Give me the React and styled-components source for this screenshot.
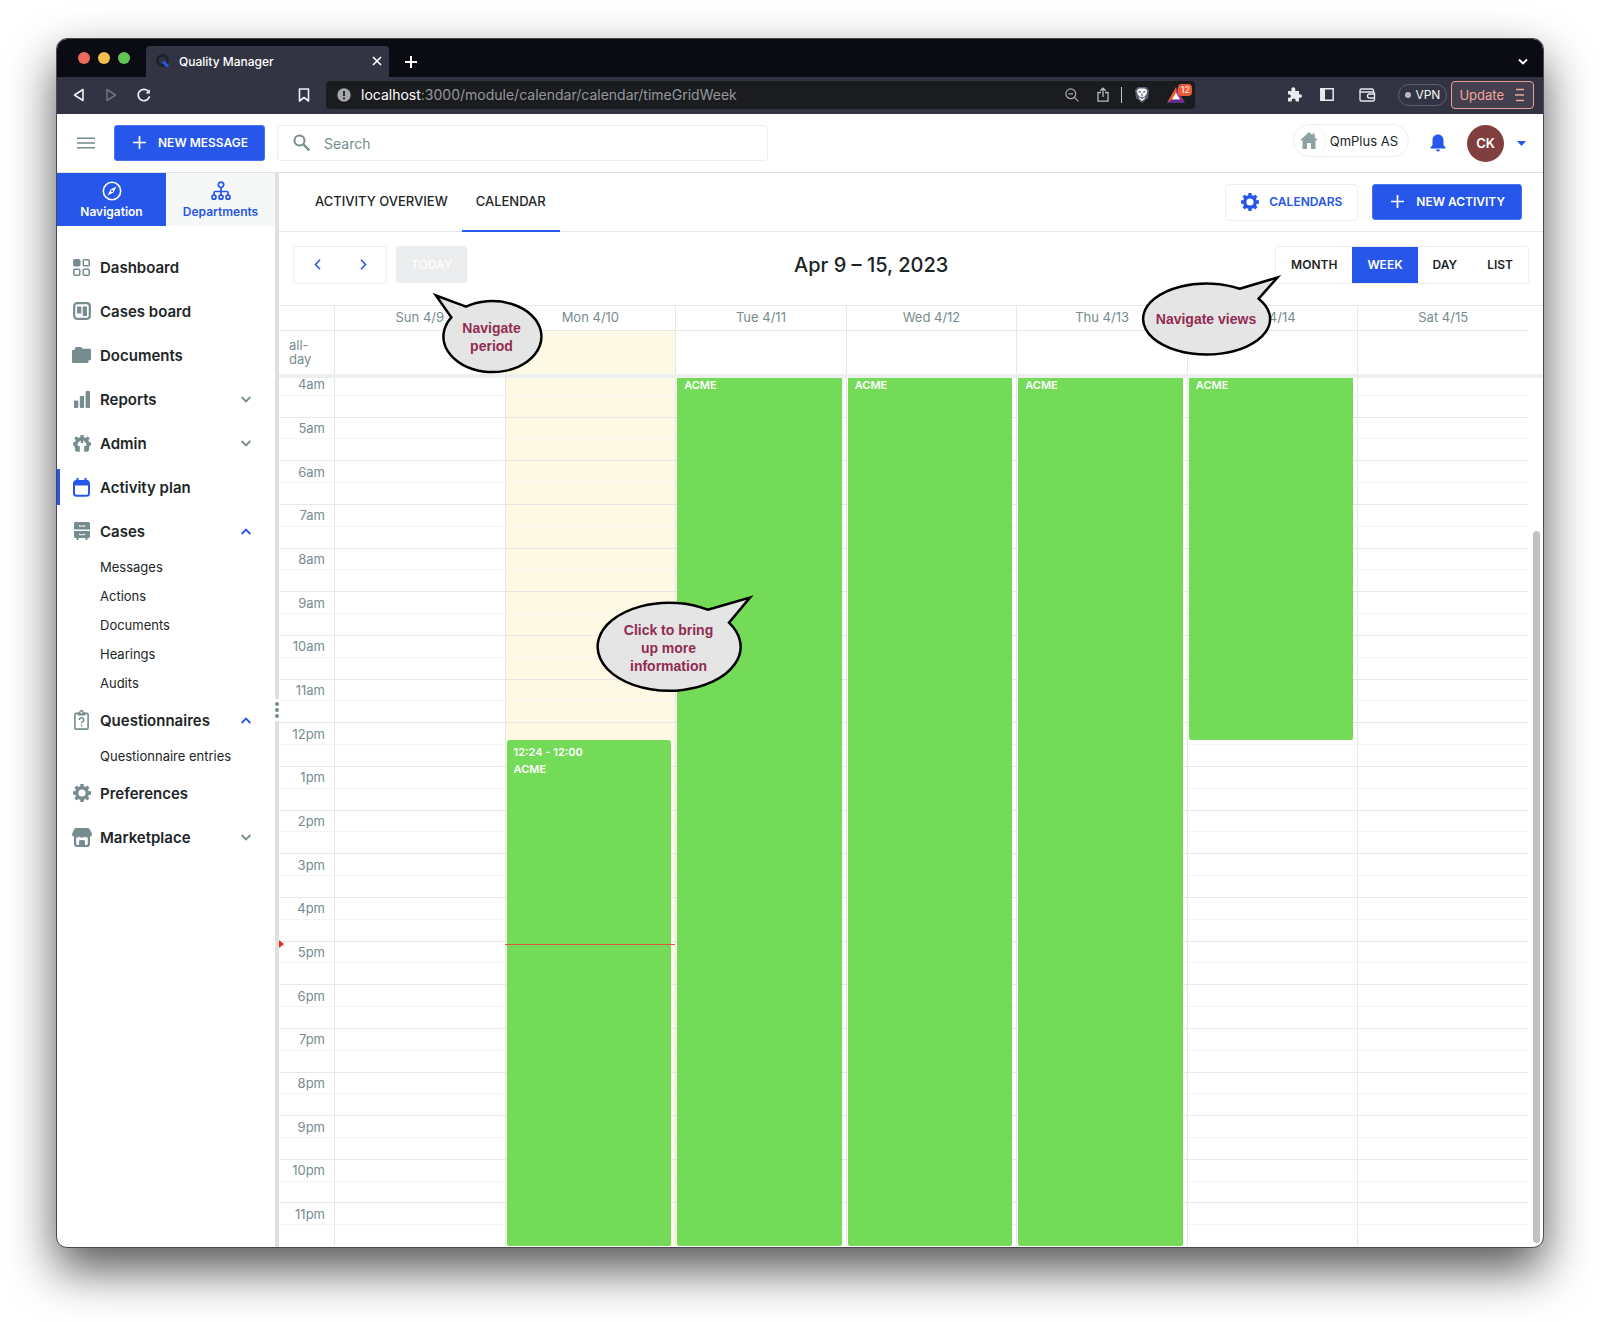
import React, { useState } from 'react'
import styled, { createGlobalStyle } from 'styled-components'

const BLUE = '#2656ea'
const GREY = '#768c8e'
const LINE = '#e6e8e8'

const days = ['Sun 4/9', 'Mon 4/10', 'Tue 4/11', 'Wed 4/12', 'Thu 4/13', 'Fri 4/14', 'Sat 4/15']
const TODAY = 1
const FIRST_HOUR = 4
const HOURS = 20

const events = [
  { day: 1, start: 12.4, end: 24, time: '12:24 - 12:00', title: 'ACME' },
  { day: 2, start: 4, end: 24, title: 'ACME' },
  { day: 3, start: 4, end: 24, title: 'ACME' },
  { day: 4, start: 4, end: 24, title: 'ACME' },
  { day: 5, start: 4, end: 12.4, title: 'ACME' }
]

const slots = Array.from({ length: HOURS * 2 }, (_, i) => FIRST_HOUR + i / 2)
const percent = (hour) => `${((hour - FIRST_HOUR) / HOURS) * 100}%`
const hourLabel = (hour) => `${hour > 12 ? hour - 12 : hour}${hour < 12 ? 'am' : 'pm'}`

function App() {
  return (
    <React.Fragment>
      <GlobalStyle/>
      <Desktop>
        <Window>
          <TabStrip/>
          <BrowserBar/>
          <AppHeader/>
          <AppBody>
            <Sidebar/>
            <Splitter><Handle><i/><i/><i/></Handle></Splitter>
            <Main/>
          </AppBody>
        </Window>
      </Desktop>
    </React.Fragment>
  )
}

const TabStrip = () => {
  return (
    <Strip>
      <Lights>
        <Light $color="#ed6a5e"/>
        <Light $color="#f4bf4f"/>
        <Light $color="#61c554"/>
      </Lights>
      <BrowserTab>
        <svg width="14" height="14" viewBox="0 0 14 14" fill="none">
          <circle cx="6.5" cy="6.5" r="5" stroke="#1d242b" strokeWidth="3"/>
          <path d="M7 7.5L12 12.5" stroke={BLUE} strokeWidth="3"/>
        </svg>
        <TabTitle>Quality Manager</TabTitle>
        <IconButton aria-label="Close tab">
          <svg width="10" height="10" viewBox="0 0 10 10" stroke="#fff" strokeWidth="1.7"><path d="M1 1l8 8M9 1l-8 8"/></svg>
        </IconButton>
      </BrowserTab>
      <IconButton aria-label="New tab">
        <svg width="12" height="12" viewBox="0 0 12 12" stroke="#fff" strokeWidth="2"><path d="M6 0v12M0 6h12"/></svg>
      </IconButton>
      <Spacer/>
      <IconButton aria-label="Search tabs">
        <svg width="10" height="8" viewBox="0 0 10 8" fill="none" stroke="#fff" strokeWidth="1.8"><path d="M1 1.5l4 4 4-4"/></svg>
      </IconButton>
    </Strip>
  )
}

const BrowserBar = () => {
  return (
    <Bar>
      <BarNav>
        <IconButton aria-label="Back">
          <svg width="12" height="14" viewBox="0 0 12 14" fill="none" stroke="#f0f0f2" strokeWidth="1.6" strokeLinejoin="round"><path d="M10 1.5v11L1.5 7z"/></svg>
        </IconButton>
        <IconButton aria-label="Forward">
          <svg width="12" height="14" viewBox="0 0 12 14" fill="none" stroke="#6f727f" strokeWidth="1.5" strokeLinejoin="round"><path d="M2 1.5v11L10.5 7z"/></svg>
        </IconButton>
        <IconButton aria-label="Reload">
          <svg width="14" height="14" viewBox="0 0 14 14" fill="none" stroke="#f0f0f2" strokeWidth="1.7" strokeLinecap="round"><path d="M12.3 9A5.7 5.7 0 1 1 11 3"/><path d="M12.8 1.2v4.2H8.6z" fill="#f0f0f2" stroke="none"/></svg>
        </IconButton>
      </BarNav>
      <IconButton aria-label="Bookmark">
        <svg width="12" height="14" viewBox="0 0 12 14" fill="none" stroke="#f0f0f2" strokeWidth="1.6" strokeLinejoin="round"><path d="M1.5 1h9v12L6 9.5 1.5 13z"/></svg>
      </IconButton>
      <Address>
        <svg width="14" height="14" viewBox="0 0 14 14"><circle cx="7" cy="7" r="6.7" fill="#a4a6aa"/><path d="M7 3v5M7 9.4v1.8" stroke="#1b1c20" strokeWidth="1.8"/></svg>
        <Url type="button"><b>localhost</b>:3000/module/calendar/calendar/timeGridWeek</Url>
        <AddressIcons>
          <svg width="14" height="14" viewBox="0 0 14 14" fill="none" stroke="#a9abb0" strokeWidth="1.2"><circle cx="5.8" cy="5.8" r="4.9"/><path d="M9.4 9.4l4 4M3.6 5.8H8"/></svg>
          <svg width="12" height="15" viewBox="0 0 12 15" fill="none" stroke="#b9bbc0" strokeWidth="1.3"><path d="M4 5.5H1v8.7h10V5.5H8M6 10V1.2M3.3 3.8L6 1.1l2.7 2.7"/></svg>
          <Divider/>
          <svg width="16" height="18" viewBox="0 0 16 18">
            <path d="M4 1h8l3 3-1 8-6 5-6-5L1 4z" fill="#5b5d70"/>
            <path d="M5 2.5h6l2.3 2.3-1 3.7-2 2 .6 2L8 15l-2.900-2.500.6-2-2-2-1-3.700z" fill="#fff"/>
            <path d="M4.400 5.500l2.600.8M11.600 5.500l-2.600.8M8 7.500v3M6.300 11.200L8 12.400l1.700-1.200" stroke="#4a4c5e" strokeWidth="1.100" fill="none"/>
          </svg>
          <Rewards>
            <svg width="18" height="16" viewBox="0 0 18 16">
              <path d="M9 0L0 16l9-5.500z" fill="#ef5a2f"/>
              <path d="M9 0l9 16-9-5.500z" fill="#a3317e"/>
              <path d="M0 16h18l-5-3.500H4.500z" fill="#5f2e8e"/>
              <path d="M9 5.600l4 7H5z" fill="#fff"/>
            </svg>
            <Badge>12</Badge>
          </Rewards>
        </AddressIcons>
      </Address>
      <BarActions>
        <svg width="15" height="15" viewBox="0 0 15 15" fill="#e9e9ee"><path d="M1 4h3.500C3.800 1.800 4.800.3 6.300.3S8.800 1.800 8.200 4H12v3.300c1.700-.5 3 .3 3 1.700s-1.300 2.200-3 1.700V14.500H8.600c.3-1.900-.6-2.900-1.900-2.900s-2.300 1-1.900 2.900H1v-3.700c2 .3 2.900-.5 2.900-1.700S3 7.200 1 7.500z"/></svg>
        <svg width="14" height="13" viewBox="0 0 14 13" fill="none" stroke="#e9e9ee" strokeWidth="1.500"><path d="M.8.8h12.400v11.400H.8z"/><path d="M1 1h4v11H1z" fill="#e9e9ee" stroke="none"/></svg>
        <WalletIcon/>
      </BarActions>
      <Vpn type="button"><i/>VPN</Vpn>
      <Update type="button">
        Update
        <svg width="10" height="14" viewBox="0 0 10 14" stroke="#f0a79c" strokeWidth="1.300"><path d="M1 1.500h8M0 7h9M1 12.500h8"/></svg>
      </Update>
    </Bar>
  )
}

const WalletIcon = () => (
  <svg width="17" height="14" viewBox="0 0 17 14" fill="none" stroke="#e9e9ee" strokeWidth="1.400">
    <path d="M14.500 4V2.500a1.500 1.500 0 0 0-1.500-1.500H2.500A1.500 1.500 0 0 0 1 2.500v9A1.500 1.500 0 0 0 2.500 13H14a1.500 1.500 0 0 0 1.500-1.500V10M1.500 4H14a1.500 1.500 0 0 1 1.500 1.500V10h-5a2 2 0 0 1 0-4h5"/>
  </svg>
)

const AppHeader = () => {
  return (
    <Header>
      <MenuButton aria-label="Menu">
        <svg width="18" height="12" viewBox="0 0 18 12" stroke={GREY} strokeWidth="1.500"><path d="M0 1.200h18M0 6h18M0 10.800h18"/></svg>
      </MenuButton>
      <PrimaryButton type="button"><Plus/>NEW MESSAGE</PrimaryButton>
      <SearchBox>
        <svg width="18" height="18" viewBox="0 0 18 18" fill="none" stroke={GREY} strokeWidth="2"><circle cx="6.500" cy="6.500" r="5"/><path d="M10.500 10.500l5.800 5.800" strokeWidth="2.400"/></svg>
        <SearchInput type="search" placeholder="Search" aria-label="Search"/>
      </SearchBox>
      <Spacer/>
      <Company type="button">
        <CompanyIcon>
          <svg width="18" height="17" viewBox="0 0 18 17" fill="#8fa1a3"><path d="M9 0l3.500 3.200V1.500h2.200v3.700L18 8.300h-2.500V17H11v-6H7v6H2.500V8.300H0z"/></svg>
        </CompanyIcon>
        QmPlus AS
      </Company>
      <IconButton aria-label="Notifications">
        <svg width="16" height="18" viewBox="0 0 16 18" fill={BLUE}><path d="M8 .5c3.300 0 5.500 2.500 5.500 5.700V11l2 2.500v1H.5v-1l2-2.500V6.200C2.500 3 4.700.5 8 .5zM6 15.500h4A2 2 0 0 1 6 15.500z"/></svg>
      </IconButton>
      <Avatar>CK</Avatar>
      <IconButton aria-label="Account menu">
        <svg width="9" height="5" viewBox="0 0 9 5" fill={BLUE}><path d="M0 0h9L4.500 5z"/></svg>
      </IconButton>
    </Header>
  )
}

const Plus = () => (
  <svg width="13" height="13" viewBox="0 0 13 13" stroke="#fff" strokeWidth="1.700"><path d="M6.500 0v13M0 6.500h13"/></svg>
)

const Gear = ({ size = 18 }) => (
  <svg width={size} height={size} viewBox="0 0 18 18" fill="none" stroke="currentColor">
    <circle cx="9" cy="9" r="5.300" strokeWidth="3.400"/>
    {[0, 45, 90, 135].map((angle) => (
      <path key={angle} d="M9 0v3.500M9 14.500V18" strokeWidth="3.400" transform={`rotate(${angle} 9 9)`}/>
    ))}
  </svg>
)

const Chevron = ({ open }) => (
  <svg width="10" height="7" viewBox="0 0 10 7" fill="none" stroke={open ? BLUE : GREY} strokeWidth="1.800">
    <path d={open ? 'M.7 6L5 1.600 9.300 6' : 'M.7 1L5 5.400 9.300 1'}/>
  </svg>
)

const icons = {
  dashboard: (
    <svg width="17" height="17" viewBox="0 0 17 17" fill="none" stroke={GREY} strokeWidth="1.500">
      <rect x=".8" y=".8" width="6" height="6" rx="1" fill={GREY}/>
      <rect x="10.200" y=".8" width="6" height="6" rx="1"/>
      <rect x=".8" y="10.200" width="6" height="6" rx="1"/>
      <rect x="10.200" y="10.200" width="6" height="6" rx="1"/>
    </svg>
  ),
  board: (
    <svg width="18" height="18" viewBox="0 0 18 18">
      <rect x="1.200" y="1.200" width="15.600" height="15.600" rx="3" fill="none" stroke={GREY} strokeWidth="2.200"/>
      <rect x="4" y="4.500" width="4.300" height="7" rx=".6" fill={GREY}/>
      <rect x="9.700" y="4.500" width="4.300" height="9.500" rx=".6" fill={GREY}/>
    </svg>
  ),
  documents: (
    <svg width="19" height="16" viewBox="0 0 19 16" fill={GREY}><path d="M3 1.200Q3 0 4.200 0H9l1.600 1.700H18q1 0 1 1V12q0 1.200-1.200 1.200H16.500v1.600q0 1.200-1.200 1.200H1.200Q0 16 0 14.800V4q0-1.200 1.200-1.200H3z"/></svg>
  ),
  reports: (
    <svg width="16" height="17" viewBox="0 0 16 17" fill={GREY}>
      <rect y="9.500" width="4.300" height="7.500" rx="1"/>
      <rect x="5.800" y="5" width="4.300" height="12" rx="1"/>
      <rect x="11.600" y="0" width="4.400" height="17" rx="1"/>
    </svg>
  ),
  admin: (
    <svg width="18" height="17" viewBox="0 0 18 17" fill="none" stroke={GREY}>
      <path d="M4.700 14A6 6 0 1 1 13.300 14" strokeWidth="3.600"/>
      <path d="M9 0v3M2.300 2.300l2 2M15.700 2.300l-2 2M0 9h3M18 9h-3M2.600 15.800l2.200-2.200M15.400 15.800l-2.200-2.200" strokeWidth="3.200"/>
      <path d="M5.600 11v5.800M12.400 11v5.800" strokeWidth="2.400"/>
      <path d="M9 2v6" strokeWidth="2.600"/>
    </svg>
  ),
  plan: (
    <svg width="17" height="19" viewBox="0 0 17 19">
      <rect x="1" y="3" width="15" height="14.800" rx="2.600" fill="none" stroke={BLUE} strokeWidth="2"/>
      <path d="M1 7.500V4.500Q1 2.500 3 2.500h11q2 0 2 2v3zM3.500 0h2v3h-2zM11.500 0h2v3h-2z" fill={BLUE}/>
    </svg>
  ),
  cases: (
    <svg width="16" height="18" viewBox="0 0 16 18" fill={GREY}>
      <path d="M1.500 0h13Q16 0 16 1.500V7.500H0V1.500Q0 0 1.500 0zM0 9h16v5.500q0 1.500-1.500 1.500H13.500v2h-2v-2h-7v2h-2v-2H1.500Q0 16 0 14.500z"/>
      <path d="M5.500 3.200v1h5v-1M5.500 11.700v1h5v-1" fill="none" stroke="#fff" strokeWidth="1"/>
    </svg>
  ),
  questions: (
    <svg width="15" height="20" viewBox="0 0 15 20" fill="none" stroke={GREY}>
      <rect x=".9" y="3.400" width="13.200" height="15.700" rx="1.200" strokeWidth="1.600"/>
      <path d="M3.700 2.500h7.600v3H3.700z" fill={GREY} stroke="none"/>
      <circle cx="7.500" cy="2.500" r="1.700" fill="#fff" strokeWidth="1.400"/>
      <path d="M5.200 10q0-2.200 2.300-2.200T9.800 9.900q0 1.200-1.300 1.700t-1 1.900M7.500 14.800v1.500" strokeWidth="1.400"/>
    </svg>
  ),
  preferences: <Gear/>,
  market: (
    <svg width="20" height="19" viewBox="0 0 20 19">
      <path d="M4.500 0h11q2 0 2.700 2L20 6q0 2.500-2 2.800V16q0 3-3 3H5q-3 0-3-3V8.800Q0 8.500 0 6l1.800-4Q2.500 0 4.500 0z" fill={GREY}/>
      <path d="M4.200 9.600v5.800q0 1.500 1.500 1.500H7v-3.500q0-1.500 1.500-1.500h3q1.500 0 1.500 1.500v3.500h1.300q1.500 0 1.500-1.500V9.600q-1.600.1-2.800-1.200Q10 10.800 7 8.400 5.800 9.700 4.200 9.600z" fill="#fff"/>
    </svg>
  )
}

const menu = [
  { name: 'Dashboard', icon: 'dashboard' },
  { name: 'Cases board', icon: 'board' },
  { name: 'Documents', icon: 'documents' },
  { name: 'Reports', icon: 'reports', expandable: true },
  { name: 'Admin', icon: 'admin', expandable: true },
  { name: 'Activity plan', icon: 'plan', active: true },
  { name: 'Cases', icon: 'cases', expandable: true, children: ['Messages', 'Actions', 'Documents', 'Hearings', 'Audits'] },
  { name: 'Questionnaires', icon: 'questions', expandable: true, children: ['Questionnaire entries'] },
  { name: 'Preferences', icon: 'preferences' },
  { name: 'Marketplace', icon: 'market', expandable: true }
]

const Sidebar = () => {
  return (
    <Side>
      <SideTabs>
        <SideTab $active type="button">
          <svg width="20" height="20" viewBox="0 0 20 20" fill="none" stroke="currentColor"><circle cx="10" cy="10" r="8.700" strokeWidth="1.600"/><path d="M14.500 5.500L11.500 11.500 5.500 14.500 8.500 8.500z" fill="currentColor" stroke="none"/><circle cx="10" cy="10" r="1.100" fill={BLUE} stroke="none"/></svg>
          Navigation
        </SideTab>
        <SideTab type="button">
          <svg width="20" height="20" viewBox="0 0 20 20" fill="none" stroke="currentColor" strokeWidth="1.700"><circle cx="10" cy="3.800" r="2.700"/><circle cx="3" cy="16.200" r="2"/><circle cx="10" cy="16.200" r="2"/><circle cx="17" cy="16.200" r="2"/><path d="M10 6.500v7.700M3 14.200v-2.500q0-1.200 1.200-1.200h11.600q1.200 0 1.200 1.200v2.500"/></svg>
          Departments
        </SideTab>
      </SideTabs>
      <Nav>
        {menu.map(({ name, icon, active, expandable, children }, key) =>
          <React.Fragment key={key}>
            <NavItem href="#" $active={active}>
              <NavIcon>{icons[icon]}</NavIcon>
              <NavLabel>{name}</NavLabel>
              {expandable && <Chevron open={Boolean(children)}/>}
            </NavItem>
            {children && children.map((child) => <SubItem href="#" key={child}>{child}</SubItem>)}
          </React.Fragment>
        )}
      </Nav>
    </Side>
  )
}

const Main = () => {
  const [view, setView] = useState('WEEK')

  return (
    <MainArea>
      <PageTabs>
        <PageTab type="button">ACTIVITY OVERVIEW</PageTab>
        <PageTab type="button" $active>CALENDAR</PageTab>
        <Spacer/>
        <PageActions>
          <OutlineButton type="button"><Gear/>CALENDARS</OutlineButton>
          <PrimaryButton type="button"><Plus/>NEW ACTIVITY</PrimaryButton>
        </PageActions>
      </PageTabs>
      <Calendar>
        <CalendarBar>
          <PeriodControls>
            <ArrowGroup>
              <ArrowButton aria-label="Previous week">
                <svg width="7" height="11" viewBox="0 0 7 11" fill="none" stroke={BLUE} strokeWidth="1.600"><path d="M6 .7L1.500 5.500 6 10.300"/></svg>
              </ArrowButton>
              <ArrowButton aria-label="Next week">
                <svg width="7" height="11" viewBox="0 0 7 11" fill="none" stroke={BLUE} strokeWidth="1.600"><path d="M1 .7l4.500 4.800L1 10.300"/></svg>
              </ArrowButton>
            </ArrowGroup>
            <TodayButton type="button" disabled>TODAY</TodayButton>
          </PeriodControls>
          <Period>Apr 9 – 15, 2023</Period>
          <ViewGroup>
            {['MONTH', 'WEEK', 'DAY', 'LIST'].map((name) =>
              <ViewButton type="button" key={name} $active={view === name} onClick={() => setView(name)}>{name}</ViewButton>
            )}
          </ViewGroup>
        </CalendarBar>
        <WeekHead>
          <thead>
            <DayRow>
              <td/>
              {days.map((day) => <th scope="col" key={day}>{day}</th>)}
            </DayRow>
          </thead>
          <tbody>
            <AllDayRow>
              <th scope="row">all-day</th>
              {days.map((day, key) => <DayCell key={day} $today={key === TODAY}/>)}
            </AllDayRow>
          </tbody>
        </WeekHead>
        <ScrollArea>
          <TimeGrid>
            <SlotTable>
              <tbody>
                {slots.map((slot) =>
                  <SlotRow key={slot} $half={slot % 1 !== 0}>
                    <th scope="row">{slot % 1 === 0 && hourLabel(slot)}</th>
                    {days.map((day, key) => <DayCell key={day} $today={key === TODAY}/>)}
                  </SlotRow>
                )}
              </tbody>
            </SlotTable>
            <EventLayer>
              <NowArrow style={{ top: percent(17.08) }}/>
              {days.map((day, key) =>
                <EventColumn key={day}>
                  {events.filter((event) => event.day === key).map(({ start, end, time, title }) =>
                    <Event href="#" key={start} style={{ top: percent(start), height: `${((end - start) / HOURS) * 100}%` }}>
                      {time && <span>{time}</span>}
                      <span>{title}</span>
                    </Event>
                  )}
                  {key === TODAY && <NowLine style={{ top: percent(17.08) }}/>}
                </EventColumn>
              )}
            </EventLayer>
          </TimeGrid>
          <ScrollThumb/>
        </ScrollArea>
        <PeriodCallout>
          <svg width="110" height="84" viewBox="0 0 110 84"><path d="M33 14.700L3 3.500 18.300 25.300A49 35.500 0 1 0 33 14.700z"/></svg>
          <p>Navigate<br/>period</p>
        </PeriodCallout>
        <ViewsCallout>
          <svg width="142" height="84" viewBox="0 0 142 84"><path d="M98.700 15.700L136.500 4.500 117.700 25.700A63.500 35.500 0 1 1 98.700 15.700z"/></svg>
          <p>Navigate views</p>
        </ViewsCallout>
        <InfoCallout>
          <svg width="161" height="102" viewBox="0 0 161 102"><path d="M111.700 17.700L154 5.500 133 30.700A71.500 44 0 1 1 111.700 17.700z"/></svg>
          <p>Click to bring<br/>up more<br/>information</p>
        </InfoCallout>
      </Calendar>
    </MainArea>
  )
}

const GlobalStyle = createGlobalStyle`
  * {
    box-sizing: border-box;
  }
  body {
    margin: 0;
    background: #fff;
    color: #1c2526;
    font-family: Inter, "Liberation Sans", sans-serif;
    font-size: 13px;
  }
  button, input {
    font-family: inherit;
    margin: 0;
  }
  button {
    cursor: pointer;
  }
  a {
    color: inherit;
    text-decoration: none;
  }
  svg {
    display: block;
    flex: none;
  }
`

const Desktop = styled.div`
  display: flex;
  min-height: 100vh;
  padding: 38px 56px 74px;
  overflow: hidden;
`

const Window = styled.div`
  display: flex;
  flex-direction: column;
  flex: 1;
  min-width: 0;
  border: 1px solid #4a4a4e;
  border-radius: 11px;
  background: #fff;
  overflow: hidden;
  box-shadow: 0 22px 48px rgba(0, 0, 0, 0.66);
`

const Spacer = styled.div`
  flex: 1;
`

const IconButton = styled.button`
  display: flex;
  align-items: center;
  justify-content: center;
  padding: 0;
  border: 0;
  background: none;
`

const Strip = styled.div`
  display: flex;
  align-items: center;
  height: 38px;
  padding: 7px 15px 0 21px;
  background: #0b0b14;
`

const Lights = styled.div`
  display: flex;
  gap: 8px;
  padding-bottom: 7px;
`

const Light = styled.span`
  width: 12px;
  height: 12px;
  border-radius: 50%;
  background: ${({ $color }) => $color};
`

const BrowserTab = styled.div`
  display: flex;
  align-items: center;
  gap: 9px;
  width: 243px;
  height: 100%;
  margin: 0 16px;
  padding: 0 7px 1px 10px;
  border-radius: 4px 4px 0 0;
  background: #323443;
`

const TabTitle = styled.span`
  flex: 1;
  color: #fff;
  font-size: 12px;
  font-weight: 500;
`

const Bar = styled.div`
  display: flex;
  align-items: center;
  height: 37px;
  padding: 0 9px 2px 16px;
  background: #323443;
`

const BarNav = styled.div`
  display: flex;
  gap: 20px;
  margin-right: 147px;
`

const Address = styled.div`
  display: flex;
  align-items: center;
  flex: 1;
  height: 28px;
  margin: 0 92px 0 16px;
  padding: 0 2px 0 11px;
  border-radius: 4px;
  background: #1b1c20;
`

const Url = styled.button`
  flex: 1;
  padding: 0 0 0 10px;
  border: 0;
  background: none;
  color: #95979c;
  font-size: 14px;
  text-align: left;
  b {
    color: #fff;
    font-weight: 400;
  }
`

const AddressIcons = styled.div`
  display: flex;
  align-items: center;
  gap: 12px;
  svg:first-child {
    margin-right: 6px;
  }
`

const Divider = styled.span`
  width: 1px;
  height: 16px;
  background: #c6c7cb;
`

const Rewards = styled.span`
  position: relative;
  width: 26px;
  margin-left: 5px;
`

const Badge = styled.span`
  position: absolute;
  top: -3px;
  right: 1px;
  width: 14px;
  border-radius: 4px;
  background: #ee5a35;
  color: #fff;
  font-size: 9px;
  line-height: 12px;
  text-align: center;
`

const BarActions = styled.div`
  display: flex;
  align-items: center;
  gap: 18px;
  svg:last-child {
    margin-left: 7px;
  }
`

const Vpn = styled.button`
  display: flex;
  align-items: center;
  gap: 4px;
  height: 22px;
  margin: 0 4px 0 22px;
  padding: 0 6px;
  border: 1px solid #5c5e6c;
  border-radius: 11px;
  background: none;
  color: #f4f4f6;
  font-size: 12px;
  i {
    width: 6px;
    height: 6px;
    border-radius: 50%;
    background: #b9bac6;
  }
`

const Update = styled.button`
  display: flex;
  align-items: center;
  gap: 11px;
  height: 28px;
  padding: 0 8px 0 7px;
  border: 1px solid #e79f96;
  border-radius: 4px;
  background: #454050;
  color: #f0a79c;
  font-size: 13px;
`

const Header = styled.header`
  display: flex;
  align-items: center;
  height: 59px;
  padding: 0 17px 0 20px;
  border-bottom: 1px solid #dfe1e1;
`

const MenuButton = styled(IconButton)`
  margin-right: 19px;
`

const PrimaryButton = styled.button`
  display: flex;
  align-items: center;
  gap: 12px;
  height: 36px;
  padding: 0 16px 1px 18px;
  border: 1px solid #4c73ef;
  border-radius: 3px;
  background: ${BLUE};
  color: #fff;
  font-size: 12px;
  font-weight: 600;
`

const OutlineButton = styled.button`
  display: flex;
  align-items: center;
  gap: 10px;
  height: 37px;
  padding: 0 15px 1px;
  border: 1px solid #eceeee;
  border-radius: 4px;
  background: #fff;
  color: ${BLUE};
  font-size: 12px;
  font-weight: 600;
`

const SearchBox = styled.label`
  display: flex;
  align-items: center;
  flex: 0 1 491px;
  gap: 13px;
  height: 36px;
  margin-left: 12px;
  padding: 0 15px;
  border: 1px solid #eceeee;
  border-radius: 3px;
`

const SearchInput = styled.input`
  flex: 1;
  min-width: 0;
  padding: 0;
  border: 0;
  outline: 0;
  background: none;
  font-size: 14px;
  &::placeholder {
    color: ${GREY};
    opacity: 1;
  }
`

const Company = styled.button`
  display: flex;
  align-items: center;
  gap: 4px;
  height: 33px;
  margin: 0 21px 5px 0;
  padding: 0 10px 0 0;
  border: 1px solid #eceeee;
  border-radius: 17px;
  background: #fff;
  color: #1c2526;
  font-size: 13px;
`

const CompanyIcon = styled.span`
  display: flex;
  align-items: center;
  justify-content: center;
  width: 32px;
  height: 32px;
  border-right: 1px solid #eceeee;
  border-radius: 50%;
`

const Avatar = styled.div`
  display: flex;
  align-items: center;
  justify-content: center;
  width: 37px;
  height: 37px;
  margin: 0 13px 0 21px;
  border-radius: 50%;
  background: #803f3e;
  color: #fff;
  font-size: 13px;
  font-weight: 600;
`

const AppBody = styled.div`
  display: flex;
  flex: 1;
  min-height: 0;
`

const Side = styled.aside`
  flex: none;
  width: 218px;
`

const SideTabs = styled.div`
  display: flex;
`

const SideTab = styled.button`
  display: flex;
  flex: 1;
  flex-direction: column;
  align-items: center;
  gap: 3px;
  height: 53px;
  padding: 8px 0 0;
  border: 0;
  background: ${({ $active }) => $active ? BLUE : '#f6f8f8'};
  color: ${({ $active }) => $active ? '#fff' : BLUE};
  font-size: 12px;
  font-weight: 600;
`

const Nav = styled.nav`
  display: flex;
  flex-direction: column;
  padding-top: 19px;
`

const NavItem = styled.a`
  position: relative;
  display: flex;
  align-items: center;
  height: 44px;
  padding: 0 24px 0 13px;
  font-size: 15px;
  font-weight: 600;
  &::before {
    content: '';
    position: absolute;
    left: -1px;
    width: 4px;
    height: 36px;
    background: ${({ $active }) => $active ? BLUE : 'transparent'};
  }
`

const NavIcon = styled.span`
  display: flex;
  justify-content: center;
  width: 23px;
  margin-right: 7px;
  color: ${GREY};
`

const NavLabel = styled.span`
  flex: 1;
`

const SubItem = styled.a`
  padding-left: 43px;
  font-size: 13px;
  line-height: 29px;
`

const Splitter = styled.div`
  display: flex;
  align-items: center;
  flex: none;
  width: 4px;
  background: #dde2e1;
`

const Handle = styled.div`
  display: flex;
  flex-direction: column;
  align-items: center;
  justify-content: center;
  gap: 2px;
  width: 4px;
  height: 22px;
  background: #fff;
  i {
    width: 4px;
    height: 4px;
    border-radius: 50%;
    background: ${GREY};
  }
`

const MainArea = styled.main`
  display: flex;
  flex-direction: column;
  flex: 1;
  min-width: 0;
`

const PageTabs = styled.div`
  display: flex;
  height: 59px;
  padding: 0 21px 0 22px;
  border-bottom: 1px solid ${LINE};
`

const PageTab = styled.button`
  height: 59px;
  padding: 0 14px 2px;
  border: 0;
  border-bottom: 2px solid ${({ $active }) => $active ? BLUE : 'transparent'};
  background: none;
  color: #1c2526;
  font-size: 13px;
  font-weight: 500;
`

const PageActions = styled.div`
  display: flex;
  align-items: center;
  gap: 14px;
`

const Calendar = styled.section`
  position: relative;
  display: flex;
  flex-direction: column;
  flex: 1;
  min-height: 0;
`

const CalendarBar = styled.div`
  display: flex;
  align-items: center;
  justify-content: space-between;
  height: 73px;
  padding: 0 14px 8px;
`

const PeriodControls = styled.div`
  display: flex;
  align-items: center;
  gap: 9px;
`

const ArrowGroup = styled.div`
  display: flex;
  height: 38px;
  border: 1px solid #eceeee;
  border-radius: 3px;
`

const ArrowButton = styled(IconButton)`
  width: 46px;
`

const TodayButton = styled.button`
  height: 37px;
  padding: 0 15px;
  border: 0;
  border-radius: 3px;
  background: #eaecee;
  color: #fafbfb;
  font-size: 12px;
  font-weight: 600;
`

const Period = styled.h2`
  margin: 0;
  font-size: 20px;
  font-weight: 500;
`

const ViewGroup = styled.div`
  display: flex;
  height: 38px;
  border: 1px solid #eceeee;
  border-radius: 3px;
`

const ViewButton = styled.button`
  padding: 0 15px;
  border: 0;
  background: ${({ $active }) => $active ? BLUE : '#fff'};
  color: ${({ $active }) => $active ? '#fff' : '#1c2526'};
  font-size: 12px;
  font-weight: 600;
`

const WeekHead = styled.table`
  display: block;
  border-top: 1px solid ${LINE};
  border-bottom: 4px solid #eef0f0;
  padding-right: 15px;
  color: ${GREY};
  thead, tbody {
    display: block;
  }
  th, td {
    padding: 0;
    font-weight: 400;
  }
`

const Row = styled.tr`
  display: grid;
  grid-template-columns: 55px repeat(7, 1fr);
`

const DayRow = styled(Row)`
  height: 24px;
  line-height: 22px;
  th {
    border-left: 1px solid ${LINE};
  }
`

const AllDayRow = styled(Row)`
  height: 44px;
  border-top: 1px solid ${LINE};
  th {
    width: 40px;
    padding: 7px 0 0 10px;
    line-height: 14px;
    text-align: left;
  }
`

const DayCell = styled.td`
  padding: 0;
  border-left: 1px solid ${LINE};
  background: ${({ $today }) => $today ? '#fef9e5' : 'transparent'};
`

const ScrollArea = styled.div`
  position: relative;
  flex: 1;
  min-height: 0;
  padding-right: 15px;
  overflow: hidden;
`

/* scrolled a little past the 4am line */
const TimeGrid = styled.div`
  position: relative;
  height: calc(100% + 4px);
  margin-top: -5px;
`

const SlotTable = styled.table`
  display: block;
  height: 100%;
  tbody {
    display: flex;
    flex-direction: column;
    height: 100%;
  }
`

const SlotRow = styled(Row)`
  flex: 1;
  min-height: 0;
  th, td {
    border-top: 1px solid ${({ $half }) => $half ? '#f3f4f4' : LINE};
  }
  th {
    display: flex;
    align-items: center;
    justify-content: flex-end;
    min-height: 0;
    padding: 0 9px 0 0;
    color: ${GREY};
    font-weight: 400;
    line-height: 12px;
  }
`

const EventLayer = styled.div`
  position: absolute;
  inset: 0;
  display: grid;
  grid-template-columns: repeat(7, 1fr);
  padding-left: 55px;
`

const EventColumn = styled.div`
  position: relative;
`

const Event = styled.a`
  position: absolute;
  left: 2px;
  right: 4px;
  display: flex;
  flex-direction: column;
  gap: 5px;
  padding: 6px 7px;
  border-radius: 3px 3px 2px 2px;
  background: #74db58;
  color: #fff;
  font-size: 11px;
  font-weight: 600;
  line-height: 12px;
`

const NowLine = styled.div`
  position: absolute;
  left: 0;
  right: 0;
  height: 1px;
  background: #e0583c;
`

const NowArrow = styled.div`
  position: absolute;
  left: 0;
  margin-top: -4px;
  border: 4px solid transparent;
  border-left: 5px solid #ee2b1c;
  border-right: 0;
`

const ScrollThumb = styled.div`
  position: absolute;
  top: 153px;
  right: 3px;
  bottom: 4px;
  width: 7px;
  border-radius: 4px;
  background: #c1c1c1;
`

const Callout = styled.div`
  position: absolute;
  z-index: 2;
  display: flex;
  color: #922b51;
  font-family: "Liberation Sans", Arial, sans-serif;
  font-size: 14px;
  font-weight: 700;
  line-height: 18px;
  text-align: center;
  path {
    fill: #e5e5e5;
    stroke: #000;
    stroke-width: 2.5px;
  }
  p {
    position: absolute;
    margin: 0;
    white-space: nowrap;
  }
`

const PeriodCallout = styled(Callout)`
  top: 60px;
  left: 154px;
  p {
    inset: 27px 0 auto 7px;
  }
`

const ViewsCallout = styled(Callout)`
  top: 41px;
  right: 260px;
  p {
    inset: 37px 12px auto 0;
  }
`

const InfoCallout = styled(Callout)`
  top: 360px;
  left: 25%;
  margin-left: 1px;
  p {
    inset: 29px 16px auto 0;
  }
`

export default App
